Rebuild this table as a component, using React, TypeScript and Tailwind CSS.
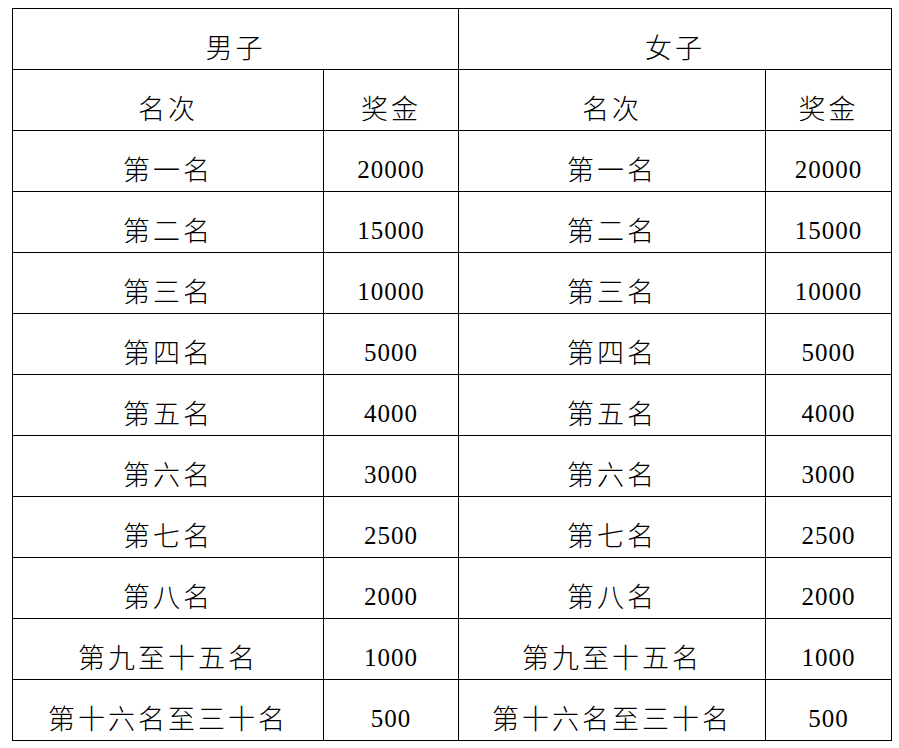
import { Fragment } from "react";

const rows: [string, string][] = [
  ["第一名", "20000"],
  ["第二名", "15000"],
  ["第三名", "10000"],
  ["第四名", "5000"],
  ["第五名", "4000"],
  ["第六名", "3000"],
  ["第七名", "2500"],
  ["第八名", "2000"],
  ["第九至十五名", "1000"],
  ["第十六名至三十名", "500"],
];

const cjk = "font-['Noto_Sans_CJK_SC',sans-serif] font-extralight text-[27px] tracking-[3px] pb-[9px]";
const num = "font-['Liberation_Serif',serif] text-[25px] tracking-[1px] pb-[9px]";

function Cell({ children, className = "", span = false }: { children: React.ReactNode; className?: string; span?: boolean }) {
  return (
    <div
      className={`flex h-[61px] items-end justify-center border-l border-t border-black leading-none text-black ${span ? "col-span-2" : ""} ${className}`}
    >
      {children}
    </div>
  );
}

export default function App() {
  return (
    <div className="min-h-screen bg-white pl-[12px] pt-[8px]">
      <div className="grid w-[880px] grid-cols-[311px_135px_307px_126px] border-b border-r border-black">
        <Cell span className={cjk}>男子</Cell>
        <Cell span className={cjk}>女子</Cell>
        <Cell className={cjk}>名次</Cell>
        <Cell className={cjk}>奖金</Cell>
        <Cell className={cjk}>名次</Cell>
        <Cell className={cjk}>奖金</Cell>
        {rows.map(([rank, prize]) => (
          <Fragment key={rank}>
            <Cell className={cjk}>{rank}</Cell>
            <Cell className={num}>{prize}</Cell>
            <Cell className={cjk}>{rank}</Cell>
            <Cell className={num}>{prize}</Cell>
          </Fragment>
        ))}
      </div>
    </div>
  );
}
